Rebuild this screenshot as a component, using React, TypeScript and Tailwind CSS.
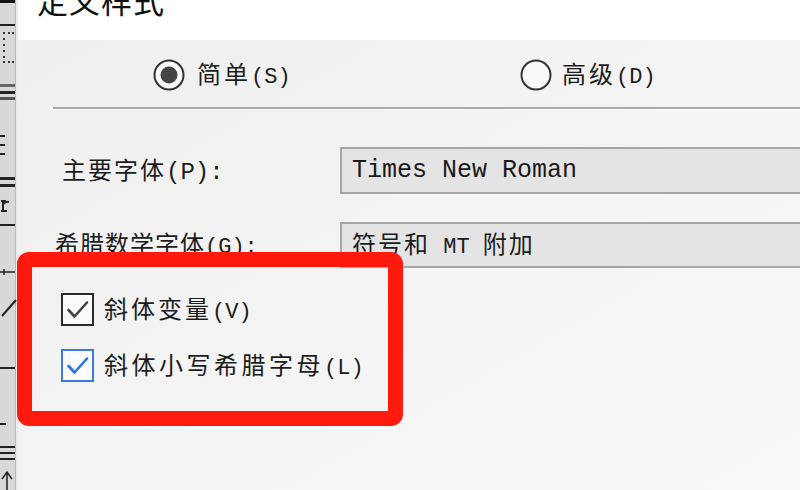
import React from "react";

const cjk = { fontFamily: '"Noto Sans CJK SC", "Noto Sans", sans-serif' };
const mono = { fontFamily: '"Liberation Mono", "DejaVu Sans Mono", monospace' };

function LeftStrip() {
  return (
    <svg width="18" height="490" viewBox="0 0 18 490" className="shrink-0 block">
      <rect x="0" y="0" width="18" height="490" fill="#d8d8d8" />
      <rect x="15" y="0" width="1" height="490" fill="#b8b8b8" />
      <rect x="16" y="0" width="2" height="490" fill="#ececec" />
      <rect x="0" y="0" width="15" height="3" fill="#111" />
      <rect x="0" y="24" width="15" height="2" fill="#222" />
      {[32, 38, 44, 50, 56, 61].map((y) => (
        <rect key={"a" + y} x="3" y={y} width="2" height="2" fill="#333" />
      ))}
      {[32, 61].map((y) => (
        <g key={"b" + y}>
          <rect x="8" y={y} width="2" height="2" fill="#333" />
          <rect x="12" y={y} width="2" height="2" fill="#333" />
        </g>
      ))}
      <rect x="0" y="84" width="15" height="3" fill="#666" />
      <rect x="0" y="91" width="15" height="3" fill="#222" />
      <rect x="0" y="97" width="15" height="3" fill="#555" />
      <rect x="0" y="135" width="5" height="2" fill="#222" />
      <rect x="0" y="144" width="5" height="2" fill="#222" />
      <rect x="0" y="153" width="5" height="2" fill="#222" />
      <rect x="0" y="177" width="15" height="3" fill="#222" />
      <rect x="0" y="184" width="15" height="3" fill="#222" />
      <path d="M1 201 L6 201 M3 201 L3 211 M1 211 L7 211 M3 204 Q6 201 9 202" stroke="#222" strokeWidth="2" fill="none" />
      <rect x="0" y="224" width="15" height="2" fill="#222" />
      <path d="M0 272 L15 272 M4 269 L4 275" stroke="#222" strokeWidth="1.5" fill="none" />
      <path d="M2 316 L16 300" stroke="#222" strokeWidth="2" fill="none" />
      <rect x="0" y="367" width="15" height="2" fill="#222" />
      <rect x="0" y="423" width="6" height="2" fill="#222" />
      <rect x="0" y="446" width="15" height="2" fill="#222" />
      <rect x="0" y="452" width="15" height="2" fill="#222" />
      <rect x="0" y="458" width="15" height="2" fill="#222" />
      <path d="M7 490 L7 473 M2 479 L7 472 L12 479" stroke="#222" strokeWidth="1.5" fill="none" />
    </svg>
  );
}

function Radio({ checked }: { checked?: boolean }) {
  return (
    <svg width="32" height="32" viewBox="0 0 32 32" className="shrink-0">
      <circle cx="16" cy="16" r="14.5" fill="#fafafa" stroke="#333" strokeWidth="2" />
      {checked && <circle cx="16" cy="16" r="8.5" fill="#444" />}
    </svg>
  );
}

function Check({ blue }: { blue?: boolean }) {
  const border = blue ? "#3a7be0" : "#2a2a2a";
  const tick = blue ? "#2b74e0" : "#444";
  return (
    <svg width="33" height="33" viewBox="0 0 33 33" className="shrink-0">
      <rect x="1" y="1" width="31" height="31" fill="#fbfbfb" stroke={border} strokeWidth="2" />
      <path d="M7.5 17 L13.5 23.5 L26 9.5" stroke={tick} strokeWidth="2.6" fill="none" strokeLinecap="round" strokeLinejoin="round" />
    </svg>
  );
}

export default function App() {
  return (
    <div className="w-[800px] h-[490px] overflow-hidden flex bg-[#f1f1f1] text-[#1c1c1c]">
      <LeftStrip />
      <div className="flex-1 flex flex-col min-w-0">
        <div className="h-[40px] bg-white overflow-hidden shrink-0">
          <div className="-mt-[16px] ml-[19px] text-[31px] leading-[31px] tracking-[1px] text-[#111]" style={cjk}>
            定义样式
          </div>
        </div>
        <div className="flex-1 flex flex-col bg-gradient-to-br from-[#efefef] to-[#f9f9f9]">
          <div className="h-[67px] pt-[3px] flex items-center shrink-0">
            <div className="w-[502px] pl-[135px] flex items-center gap-[12px]">
              <Radio checked />
              <span className="text-[24px] leading-none tracking-[3px]" style={cjk}>
                简单<span className="text-[22px] tracking-normal" style={mono}>(S)</span>
              </span>
            </div>
            <div className="flex items-center gap-[10px]">
              <Radio />
              <span className="text-[24px] leading-none tracking-[3px]" style={cjk}>
                高级<span className="text-[22px] tracking-normal" style={mono}>(D)</span>
              </span>
            </div>
          </div>
          <div className="h-[2px] ml-[35px] bg-[#a9a9a9] shrink-0" />
          <div className="h-px ml-[35px] bg-white shrink-0" />
          <div className="mt-[37px] flex items-center h-[47px] shrink-0">
            <div className="w-[322px] pl-[44px] text-[24px] leading-none tracking-[2px]" style={cjk}>
              主要字体<span className="text-[24px] tracking-normal" style={mono}>(P):</span>
            </div>
            <div className="flex-1 h-[47px] bg-[#e4e4e4] border-2 border-r-0 border-[#a6a6a6] flex items-center pl-[10px]">
              <span className="text-[25px] leading-none text-[#1a1a1a]" style={mono}>Times New Roman</span>
            </div>
          </div>
          <div className="mt-[28px] flex items-center h-[46px] shrink-0">
            <div className="w-[322px] pl-[37px] text-[24px] leading-none tracking-[1px]" style={cjk}>
              希腊数学字体<span className="text-[22px] tracking-normal" style={mono}>(G):</span>
            </div>
            <div className="flex-1 h-[46px] bg-[#e4e4e4] border-2 border-r-0 border-[#a6a6a6] flex items-center pl-[10px]">
              <span className="text-[24px] leading-none tracking-[2px]" style={cjk}>
                符号和<span className="text-[22px] tracking-normal" style={mono}> MT </span>附加
              </span>
            </div>
          </div>
          <div className="relative flex flex-col gap-[23px] pt-[25px] pl-[43px] shrink-0">
            <div className="absolute left-[-1px] top-[-16px] w-[386px] h-[174px] rounded-[12px] border-[15px] border-[#ff1a0e]" />
            <div className="flex items-center gap-[10px]">
              <Check />
              <span className="text-[24px] leading-none tracking-[3px]" style={cjk}>
                斜体变量<span className="text-[22px] tracking-normal" style={mono}>(V)</span>
              </span>
            </div>
            <div className="flex items-center gap-[10px]">
              <Check blue />
              <span className="text-[24px] leading-none tracking-[3.5px]" style={cjk}>
                斜体小写希腊字母<span className="text-[22px] tracking-normal" style={mono}>(L)</span>
              </span>
            </div>
          </div>
        </div>
      </div>
    </div>
  );
}
